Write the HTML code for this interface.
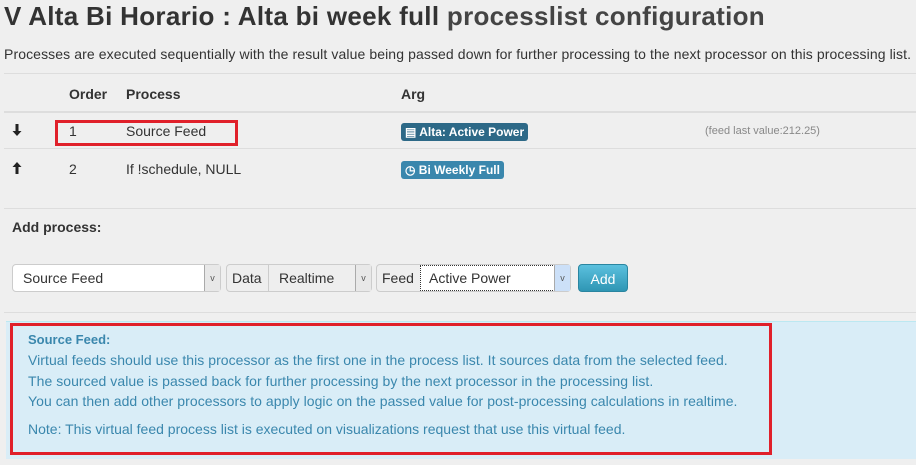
<!DOCTYPE html>
<html><head><style>
body{margin:0;width:916px;height:465px;background:#efefef;font-family:"Liberation Sans",Arial,sans-serif;color:#333;position:relative;overflow:hidden}
.a{position:absolute;white-space:nowrap}
.hr{position:absolute;left:4px;right:0;height:1px;background:#ddd}
.lbl{position:absolute;color:#fff;font-size:12px;font-weight:bold;border-radius:3px;padding:0 4px;height:18px;line-height:18px}
.box{position:absolute;background:#fff;border:1px solid #ccc;border-radius:4px;height:28px;box-sizing:border-box;font-size:14px;line-height:26px}
.arr{position:absolute;top:0;right:0;width:15px;height:26px;border-left:1px solid #aaa;background:#e8e8e8;font-size:9px;text-align:center;color:#555}
</style></head><body>
<div class="a" style="left:4px;top:1px;font-size:26px;font-weight:bold;color:#333;letter-spacing:0.3px">V Alta Bi Horario : Alta bi week full <span style="color:#444">processlist configuration</span></div>
<div class="a" style="left:4px;top:46px;font-size:14px;letter-spacing:0.1px">Processes are executed sequentially with the result value being passed down for further processing to the next processor on this processing list.</div>
<div class="hr" style="top:73px"></div>
<div class="a" style="left:69px;top:86px;font-size:14px;font-weight:bold">Order</div>
<div class="a" style="left:126px;top:86px;font-size:14px;font-weight:bold">Process</div>
<div class="a" style="left:401px;top:86px;font-size:14px;font-weight:bold">Arg</div>
<div class="hr" style="top:111px;height:2px"></div>
<svg class="a" style="left:12px;top:124px" width="10" height="12" viewBox="0 0 10 12"><path d="M3.5 0h3v7h3L5 12 0.5 7h3z" fill="#222"/></svg>
<div class="a" style="left:69px;top:123px;font-size:14px">1</div>
<div class="a" style="left:126px;top:123px;font-size:14px">Source Feed</div>
<div class="a" style="left:55px;top:120px;width:177px;height:20px;border:3px solid #e0202a"></div>
<div class="lbl" style="left:401px;top:123px;background:#2d6987">▤ Alta: Active Power</div>
<div class="a" style="left:705px;top:125px;font-size:11px;color:#888">(feed last value:212.25)</div>
<div class="hr" style="top:148px"></div>
<svg class="a" style="left:12px;top:162px" width="10" height="12" viewBox="0 0 10 12"><path d="M3.5 12h3V5h3L5 0 0.5 5h3z" fill="#222"/></svg>
<div class="a" style="left:69px;top:161px;font-size:14px">2</div>
<div class="a" style="left:126px;top:161px;font-size:14px">If !schedule, NULL</div>
<div class="lbl" style="left:401px;top:161px;background:#3a87ad">◷ Bi Weekly Full</div>
<div class="hr" style="top:208px"></div>
<div class="a" style="left:12px;top:219px;font-size:14px;font-weight:bold">Add process:</div>
<div class="box" style="left:12px;top:264px;width:209px"><span style="padding-left:10px">Source Feed</span><div class="arr">v</div></div>
<div class="box" style="left:226px;top:264px;width:146px;background:#eee"><span style="padding-left:5px">Data</span><span style="position:absolute;left:41px;top:0;border-left:1px solid #ccc;padding-left:10px;height:26px">Realtime</span><div class="arr">v</div></div>
<div class="box" style="left:376px;top:264px;width:195px;background:#eee"><span style="padding-left:5px">Feed</span><span style="position:absolute;left:43px;top:0;width:125px;border:1px dotted #333;background:#fff;padding-left:8px;height:24px;line-height:24px">Active Power</span><div class="arr" style="background:#cce0f8">v</div></div>
<div class="a" style="left:578px;top:264px;width:50px;height:28px;border-radius:4px;background:linear-gradient(#5bc0de,#2f96b4);border:1px solid #2a85a0;color:#fff;font-size:14px;line-height:28px;text-align:center;box-sizing:border-box">Add</div>
<div class="hr" style="top:312px"></div>
<div class="a" style="left:6px;top:321px;width:910px;height:137px;background:#d9edf7;border-top:1px solid #bce8f1"></div>
<div class="a" style="left:10px;top:323px;width:756px;height:126px;border:3px solid #e0202a"></div>
<div class="a" style="left:28px;top:332px;font-size:13px;font-weight:bold;color:#3a87ad">Source Feed:</div>
<div class="a" style="left:28px;top:350px;font-size:14px;line-height:20.5px;color:#3a87ad;letter-spacing:0.05px">Virtual feeds should use this processor as the first one in the process list. It sources data from the selected feed.<br>The sourced value is passed back for further processing by the next processor in the processing list.<br>You can then add other processors to apply logic on the passed value for post-processing calculations in realtime.</div>
<div class="a" style="left:28px;top:421px;font-size:14px;color:#3a87ad">Note: This virtual feed process list is executed on visualizations request that use this virtual feed.</div>
</body></html>
